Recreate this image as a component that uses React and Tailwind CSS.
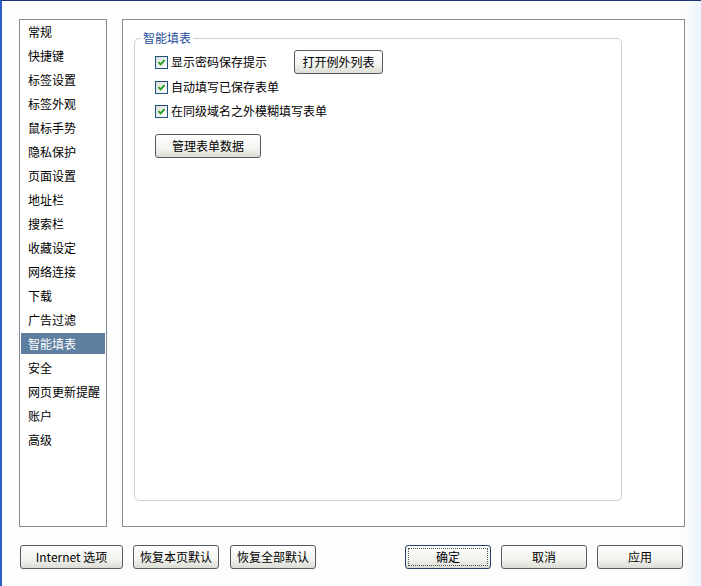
import React from "react";

const items = ["常规","快捷键","标签设置","标签外观","鼠标手势","隐私保护","页面设置","地址栏","搜索栏","收藏设定","网络连接","下载","广告过滤","智能填表","安全","网页更新提醒","账户","高级"];

function Check({ label }) {
  return (
    <div className="flex items-center h-[16px]">
      <span className="w-[13px] h-[13px] border border-[#1c5180] bg-[linear-gradient(135deg,#dcdcd7,#ffffff)] flex items-center justify-center">
        <svg width="9" height="9" viewBox="0 0 9 9">
          <path d="M1.5 4.2 L3.6 6.3 L7.6 2.2" fill="none" stroke="#21a121" strokeWidth="1.9" />
        </svg>
      </span>
      <span className="ml-[3px] text-[12px] leading-[16px] text-black">{label}</span>
    </div>
  );
}

function Btn({ children, w, def }) {
  return (
    <div
      className={`h-[24px] rounded-[3px] border flex items-center justify-center text-[12px] text-black bg-[linear-gradient(to_bottom,#ffffff,#f3f3ef_60%,#dcdcd6)] ${def ? "border-[#2a3d6e] p-[2px]" : "border-[#555a60]"}`}
      style={{ width: w }}
    >
      {def ? (
        <div className="w-full h-full border border-dotted border-[#555] flex items-center justify-center">{children}</div>
      ) : children}
    </div>
  );
}

export default function App() {
  return (
    <div
      className="w-[701px] h-[586px] border-t border-t-[#1b3678] border-l-2 border-l-[#2b5fc4] bg-[linear-gradient(to_right,#fdfdfd_97.5%,#eaf5fd)] pl-[17px] pt-[18px]"
      style={{ fontFamily: '"Noto Sans CJK SC", "Liberation Sans", sans-serif' }}
    >
      <div className="flex">
        <div className="w-[88px] h-[508px] border border-[#878c92] bg-white pt-[1px]">
          {items.map((t) => (
            <div
              key={t}
              className={`h-[21px] mb-[3px] mx-[1px] pl-[7px] flex items-center text-[12px] ${t === "智能填表" ? "bg-[#5f7fa1] text-white" : "text-black"}`}
            >
              {t}
            </div>
          ))}
        </div>
        <div className="ml-[15px] w-[563px] h-[508px] border border-[#878c92] bg-white pl-[11px] pt-[18px]">
          <div className="relative w-[488px] h-[463px] border border-[#d0d0c8] rounded-[5px] pl-[20px] pt-[12px]">
            <span className="absolute left-[6px] top-[-9px] px-[2px] bg-white text-[12px] leading-[16px] text-[#1e4e9c]">智能填表</span>
            <div className="flex items-center h-[22px]">
              <div className="w-[139px]"><Check label="显示密码保存提示" /></div>
              <Btn w="89px">打开例外列表</Btn>
            </div>
            <div className="mt-[6px]"><Check label="自动填写已保存表单" /></div>
            <div className="mt-[8px]"><Check label="在同级域名之外模糊填写表单" /></div>
            <div className="mt-[15px]"><Btn w="106px">管理表单数据</Btn></div>
          </div>
        </div>
      </div>
      <div className="flex mt-[18px] pl-[1px]">
        <Btn w="103px">Internet 选项</Btn>
        <div className="ml-[10px]"><Btn w="86px">恢复本页默认</Btn></div>
        <div className="ml-[11px]"><Btn w="86px">恢复全部默认</Btn></div>
        <div className="ml-[89px]"><Btn w="86px" def>确定</Btn></div>
        <div className="ml-[10px]"><Btn w="86px">取消</Btn></div>
        <div className="ml-[10px]"><Btn w="86px">应用</Btn></div>
      </div>
    </div>
  );
}
